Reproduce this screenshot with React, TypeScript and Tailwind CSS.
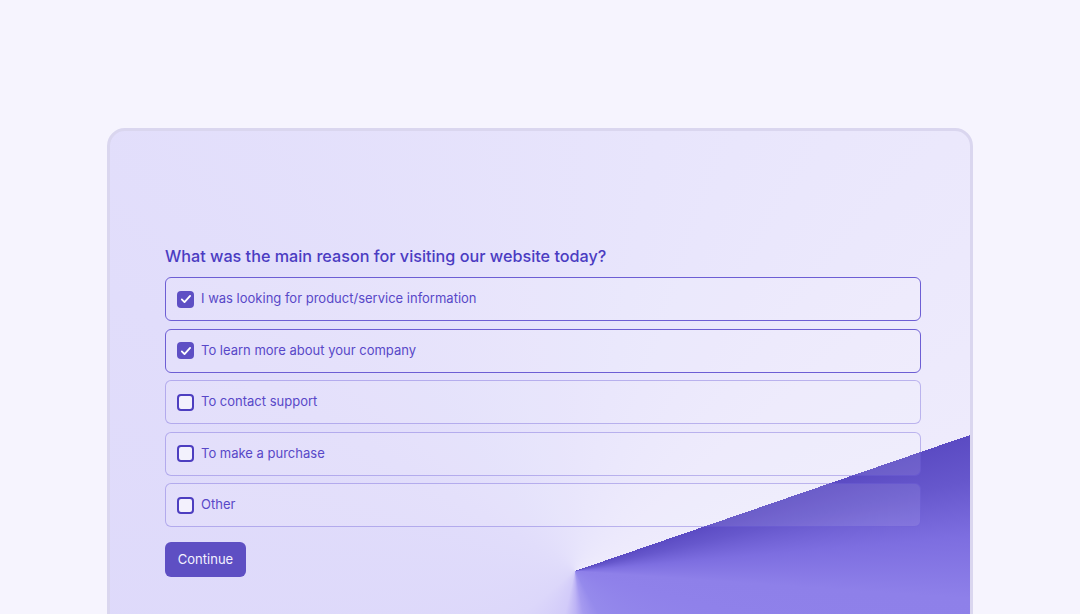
import { useState } from 'react';

const OPTIONS = [
  'I was looking for product/service information',
  'To learn more about your company',
  'To contact support',
  'To make a purchase',
  'Other',
];

function CheckBox({ checked }: { checked: boolean }) {
  if (checked) {
    return (
      <span className="flex h-[17px] w-[17px] shrink-0 items-center justify-center rounded-[4px] bg-[#5e4fc4]">
        <svg viewBox="0 0 16 16" className="h-[14px] w-[14px]" fill="none">
          <path d="M3.2 8.4l3.1 3.1 6.4-7" stroke="#ffffff" strokeWidth="2.1" strokeLinecap="round" strokeLinejoin="round" />
        </svg>
      </span>
    );
  }
  return <span className="h-[17px] w-[17px] shrink-0 rounded-[4px] border-2 border-[#4d3ec0] bg-[#f3f1fd]" />;
}

export default function App() {
  const [selected, setSelected] = useState<number[]>([0, 1]);

  const toggle = (i: number) =>
    setSelected((s) => (s.includes(i) ? s.filter((x) => x !== i) : [...s, i]));

  return (
    <div className="h-[614px] overflow-hidden bg-[#f6f4fe] pl-[107px] pt-[128px] font-['Inter',sans-serif]">
      <div className="h-[520px] w-[866px] rounded-[18px] border-[3px] border-[#dad6ef] bg-[conic-gradient(from_71deg_at_465px_440px,#5b4bc3_0deg,#6657cc_6deg,#7d6ee0_14deg,#8e80e9_23deg,#8f81ea_34deg,#958aec_80deg,#a59af0_98deg,#bdb3f5_108deg,#d2cbf9_122deg,#dcd7fa_160deg,#e1ddfb_230deg,#e8e5fc_300deg,#eeebfc_360deg)] pl-[55px] pr-[49px] pt-[113px]">
        <h2 className="mb-[9px] text-[16.2px] font-medium leading-[24px] text-[#4b3cc2]">
          What was the main reason for visiting our website today?
        </h2>

        <div className="flex flex-col gap-[7.5px]">
          {OPTIONS.map((label, i) => {
            const checked = selected.includes(i);
            return (
              <button
                key={label}
                onClick={() => toggle(i)}
                className={`flex h-[44px] items-center gap-[7px] rounded-[6px] border bg-white/10 pl-[11px] text-left ${
                  checked ? 'border-[#6d5ed4]' : 'border-[#5a48d0]/35'
                }`}
              >
                <CheckBox checked={checked} />
                <span className="text-[13px] text-[#5848c8]">{label}</span>
              </button>
            );
          })}
        </div>

        <button className="mt-[15px] h-[35px] w-[81px] rounded-[6px] bg-[#5e4fc3] text-[13px] text-[#f4f2ff]">
          Continue
        </button>
      </div>
    </div>
  );
}
